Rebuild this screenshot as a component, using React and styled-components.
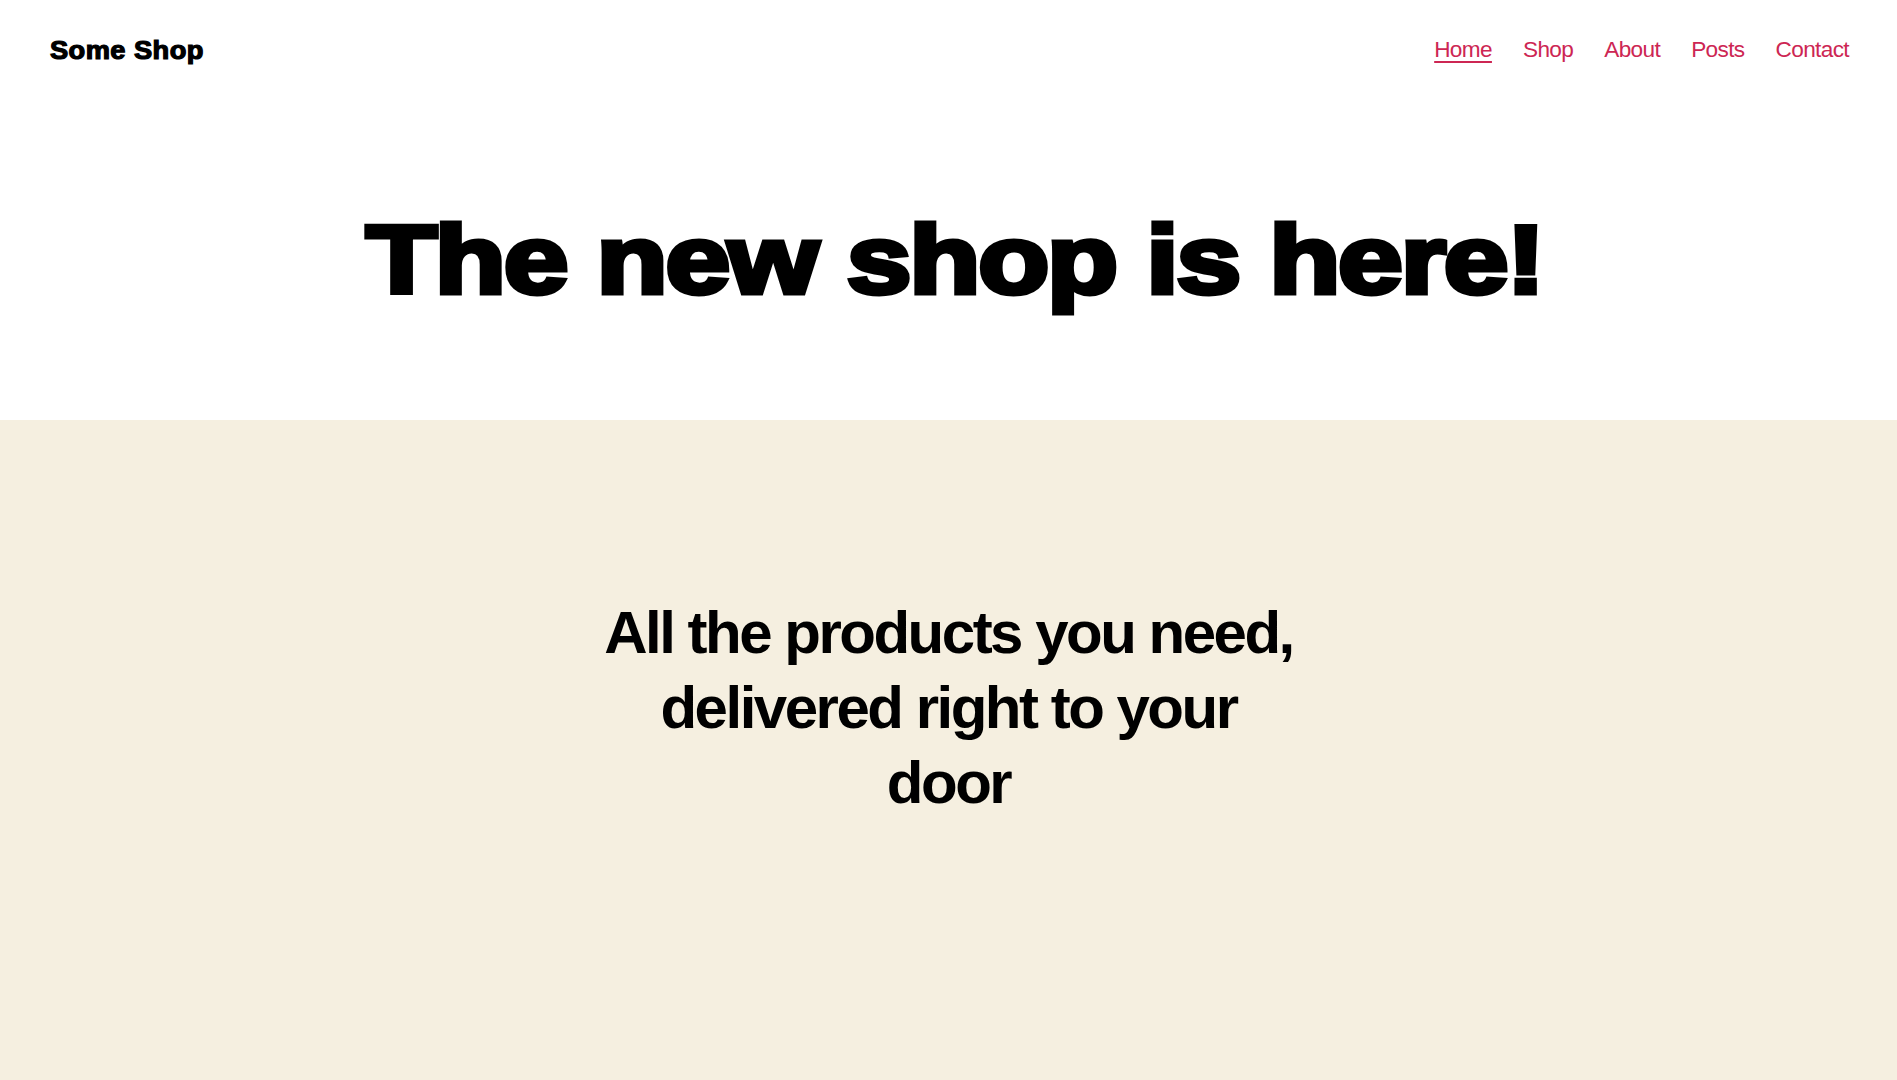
import React from 'react';
import styled, { createGlobalStyle } from 'styled-components';

const GlobalStyle = createGlobalStyle`
body{
    margin:0;
    background:#fff;
    color:#000;
    font-family:"Liberation Sans", Arial, sans-serif;
}
`

const links = ['Home', 'Shop', 'About', 'Posts', 'Contact'];

const App = () => {
    return (
        <Page>
            <GlobalStyle />
            {/* Header */}
            <Header>
                <SiteTitle>Some Shop</SiteTitle>
                <Nav>
                    {links.map((l, i) => (
                        <NavLink key={l} href="#" $current={i === 0}>{l}</NavLink>
                    ))}
                </Nav>
            </Header>
            {/* Hero */}
            <Hero>
                <HeroTitle>The new shop is here!</HeroTitle>
            </Hero>
            {/* Tagline */}
            <Band>
                <Tagline>All the products you need, delivered right to your door</Tagline>
            </Band>
        </Page>
    );
};

export default App;

const Page = styled.div`
min-height:100vh;
display:flex;
flex-direction:column;
`
/* Header */
const Header = styled.header`
height:100px;
display:flex;
align-items:center;
justify-content:space-between;
padding:0 48px 0 50px;
`
const SiteTitle = styled.div`
font-weight:700;
font-size:25px;
line-height:1.2;
letter-spacing:0.4px;
-webkit-text-stroke:1.2px #000;
transform:scaleX(1.09);
transform-origin:left center;
`
const Nav = styled.nav`
display:flex;
gap:31px;
`
const NavLink = styled.a`
font-size:22.6px;
line-height:1.2;
letter-spacing:-0.0277em;
color:#cd2653;
text-decoration:${p => p.$current ? 'underline' : 'none'};
text-decoration-thickness:2px;
text-underline-offset:4px;
`
/* Hero */
const Hero = styled.section`
padding:105px 0 105px 12px;
display:flex;
justify-content:center;
`
const HeroTitle = styled.h1`
margin:0;
font-weight:700;
font-size:97px;
line-height:1.138;
letter-spacing:-1.8px;
white-space:nowrap;
-webkit-text-stroke:5px #000;
transform:scaleX(1.2);
`
/* Tagline band */
const Band = styled.section`
flex:1;
background:#f5efe0;
padding:175px 20px 100px;
display:flex;
justify-content:center;
`
const Tagline = styled.h2`
margin:0;
max-width:700px;
text-align:center;
font-weight:700;
font-size:60px;
line-height:1.25;
letter-spacing:-0.0415625em;
`
